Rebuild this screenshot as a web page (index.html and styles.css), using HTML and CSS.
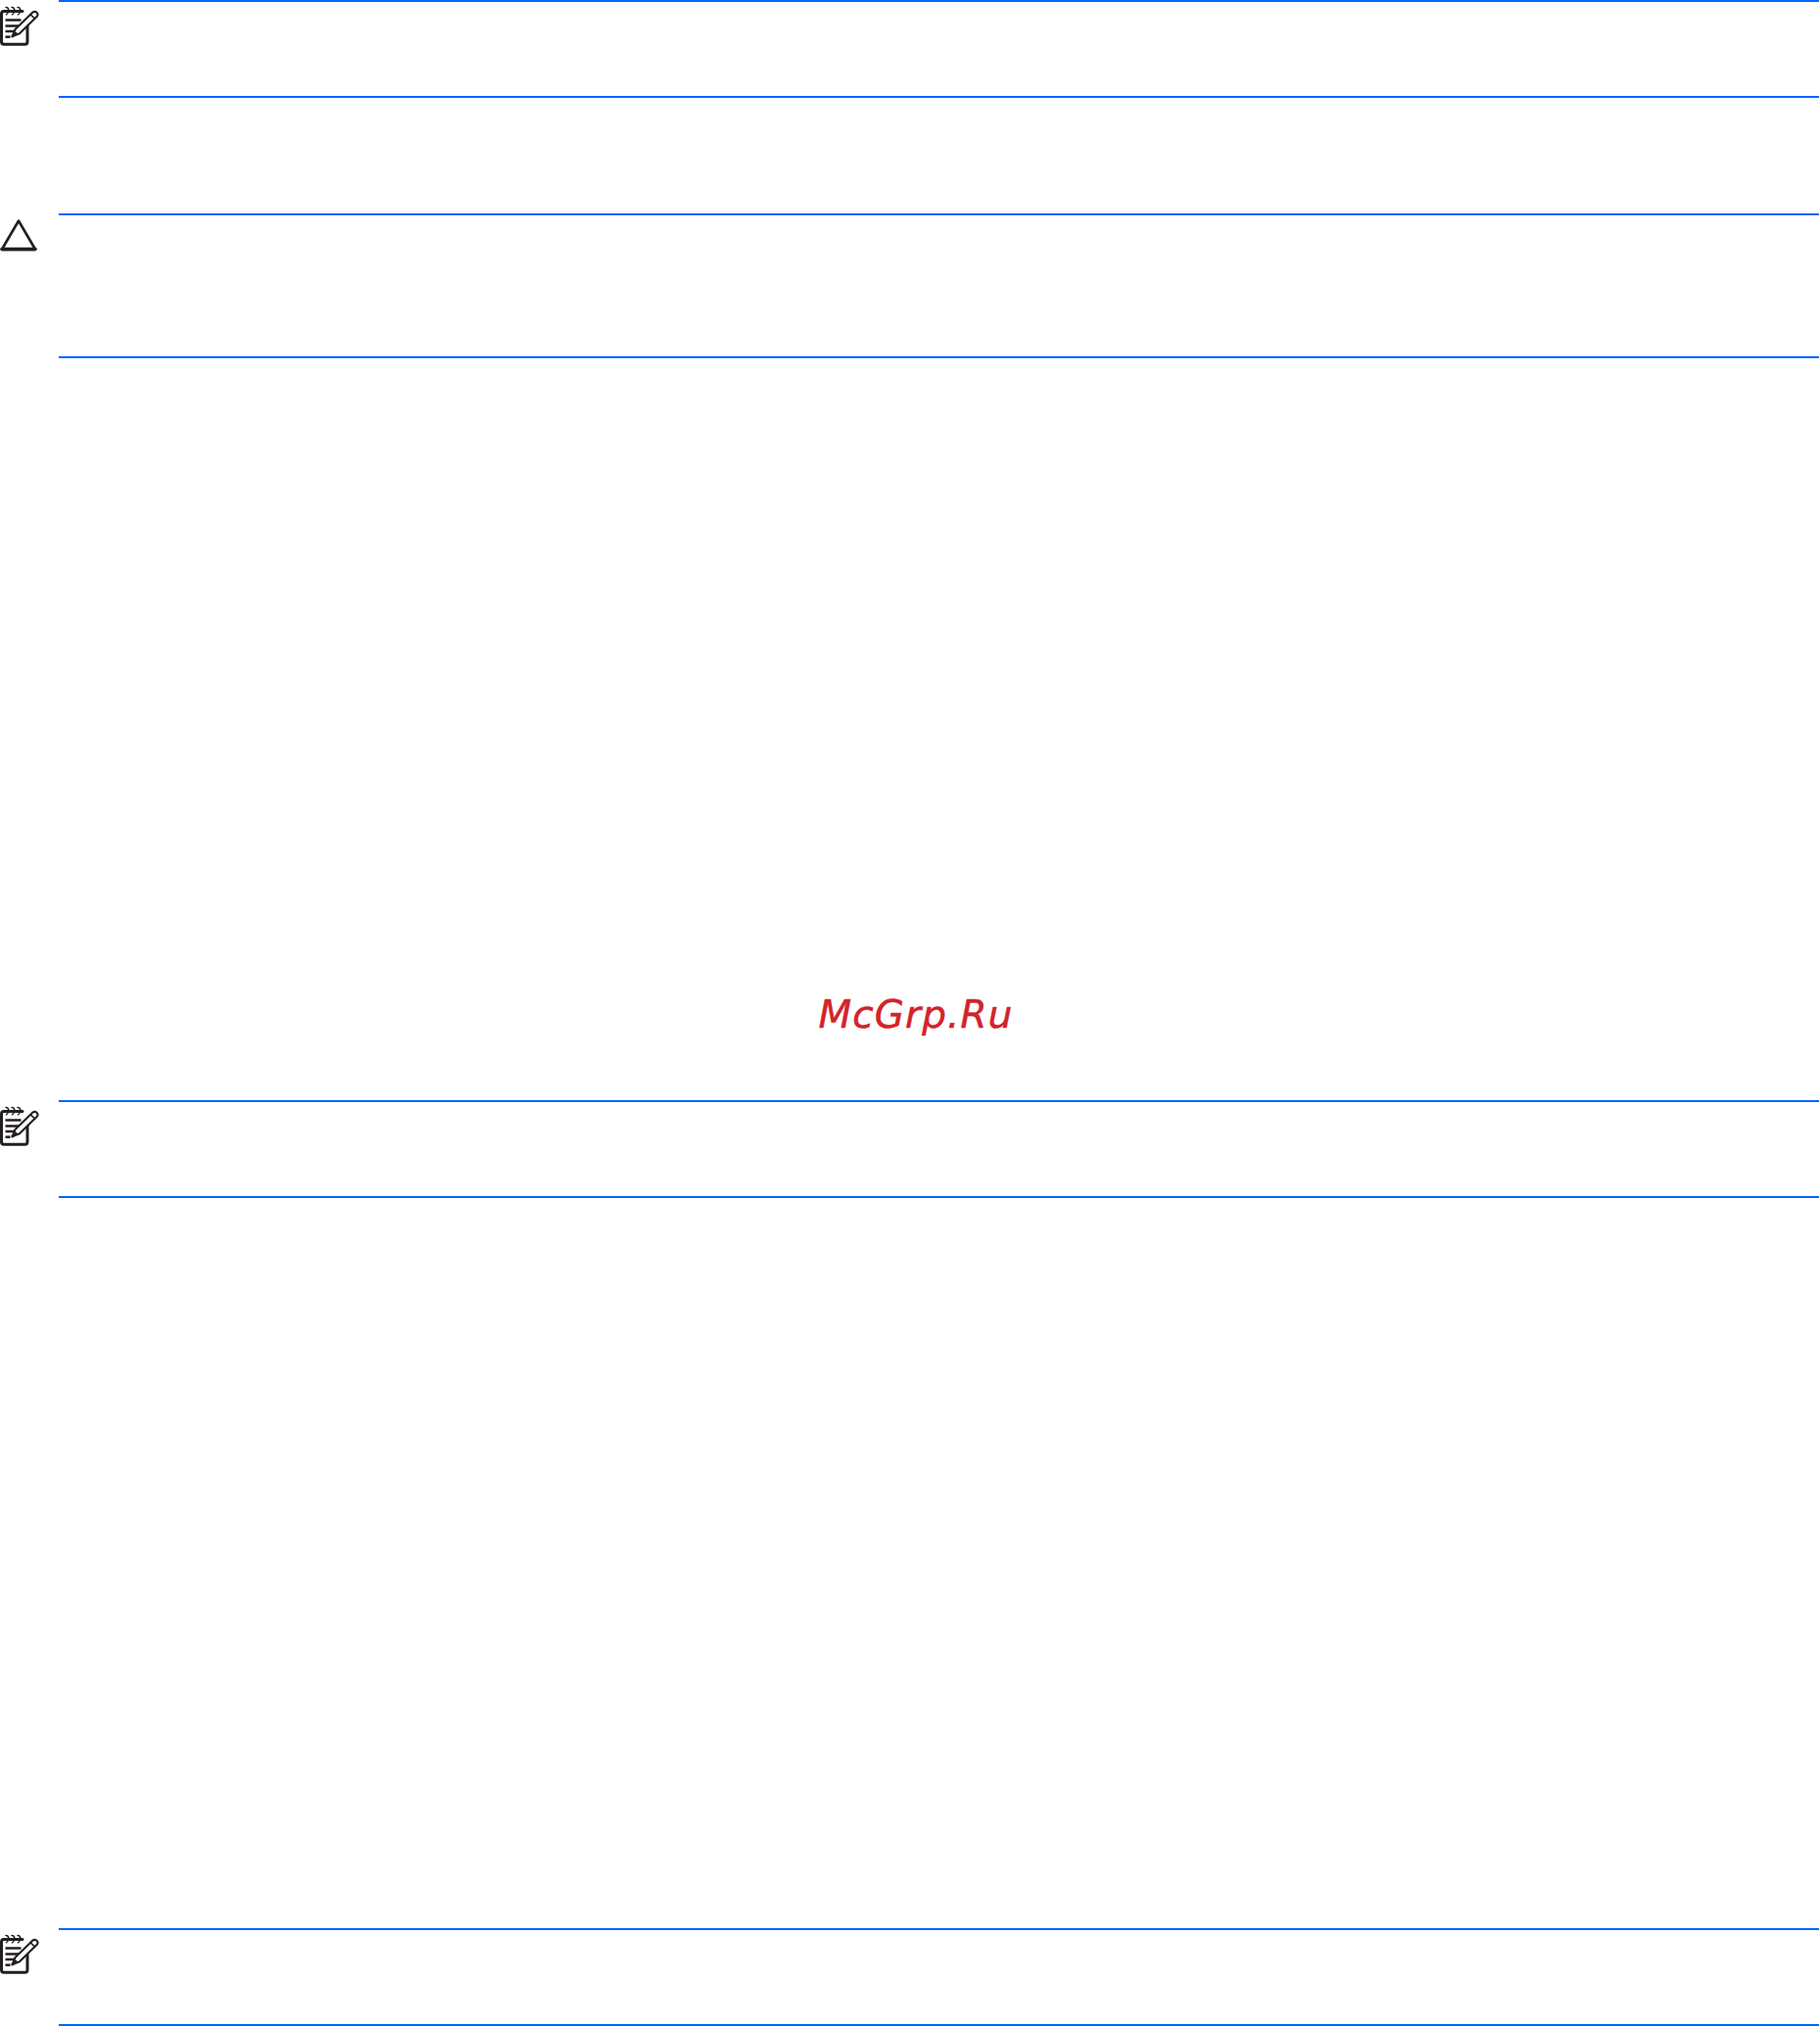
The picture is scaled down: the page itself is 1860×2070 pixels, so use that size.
FILE: index.html
```html
<!DOCTYPE html>
<html lang="en">
<head>
<meta charset="utf-8">
<title>McGrp.Ru</title>
<link rel="stylesheet" href="styles.css">
</head>
<body>
<main class="page">
  <section class="notice notice-note gap-none">
    <svg class="icon" viewBox="0 0 40 46" aria-hidden="true"><use href="#note"/></svg>
    <div class="rule-box"></div>
  </section>
  <section class="notice notice-caution gap-first">
    <svg class="icon icon-tri" viewBox="0 0 40 36" aria-hidden="true">
      <path d="M19 2.6 L2 31.6 H36 Z" fill="none" stroke="#231f20" stroke-width="2.8" stroke-linejoin="round"/>
      <path d="M2 31.6 H36" fill="none" stroke="#231f20" stroke-width="3.6" stroke-linecap="round"/>
    </svg>
    <div class="rule-box"></div>
  </section>
  <section class="notice notice-note gap-second">
    <svg class="icon" viewBox="0 0 40 46" aria-hidden="true"><use href="#note"/></svg>
    <div class="rule-box"></div>
  </section>
  <section class="notice notice-note gap-third">
    <svg class="icon" viewBox="0 0 40 46" aria-hidden="true"><use href="#note"/></svg>
    <div class="rule-box"></div>
  </section>
</main>
<div class="watermark">McGrp.Ru</div>
<svg class="defs" aria-hidden="true">
  <symbol id="note" viewBox="0 0 40 46">
    <g fill="none" stroke="#231f20" stroke-linecap="round" stroke-linejoin="round">
      <path d="M23 10.5 H4 Q1.5 10.5 1.5 13 V41.5 Q1.5 44.3 4 44.3 H25.5 Q28 44.3 28 41.5 V21" stroke-width="3"/>
      <path d="M6 6.5 Q8.8 6.5 8.8 9.5 Q8.8 12.5 6.5 13.8 M12 6.5 Q14.8 6.5 14.8 9.5 Q14.8 12.5 12.5 13.8 M18 6.5 Q20.8 6.5 20.8 9.5 Q20.8 12.5 18.5 13.8" stroke-width="1.5"/>
      <path d="M5.5 19.5 H21.5 M5.5 25.5 H19.5 M5.5 31 H14.5" stroke-width="2.6" stroke-linecap="butt"/>
      <path d="M5.5 36.7 H10.5" stroke-width="2.6" stroke-linecap="butt"/>
      <path d="M12.8 36 L15.5 29 L33.5 11.6 Q35.5 10 37.5 11.7 Q39.5 13.7 37.8 15.8 L20 33.3 Z" fill="#fff" stroke-width="2.1"/>
      <path d="M31.2 13.9 L35.7 18.2" stroke-width="1.6"/>
      <path d="M12.8 36 L16 33" stroke-width="3"/>
    </g>
  </symbol>
</svg>
</body>
</html>
```

FILE: styles.css
```css
html, body {
  margin: 0;
  padding: 0;
  background: #fff;
}

.page {
  display: flex;
  flex-direction: column;
  width: 1859px;
  height: 2070px;
}

.notice {
  display: flex;
  align-items: flex-start;
  flex: none;
}

.notice-note { height: 100px; }
.notice-caution { height: 148px; }

.gap-none { margin-top: 0; }
.gap-first { margin-top: 118px; }
.gap-second { margin-top: 758px; }
.gap-third { margin-top: 746px; }

.icon {
  flex: none;
  width: 40px;
  height: 46px;
  margin: 1px 20px 0 0;
}

.icon-tri {
  height: 36px;
  margin-top: 5px;
}

.rule-box {
  flex: 1;
  align-self: stretch;
  box-sizing: border-box;
  border-top: 2px solid #0066ff;
  border-bottom: 2px solid #0066ff;
}

.watermark {
  position: absolute;
  left: 0;
  top: 1013px;
  width: 1872px;
  text-align: center;
  font-family: "DejaVu Sans", sans-serif;
  font-style: italic;
  font-size: 39px;
  line-height: 48px;
  letter-spacing: 1.1px;
  color: #d2232a;
  -webkit-text-stroke: 0.5px #d2232a;
}

.defs {
  position: absolute;
  width: 0;
  height: 0;
}
```
